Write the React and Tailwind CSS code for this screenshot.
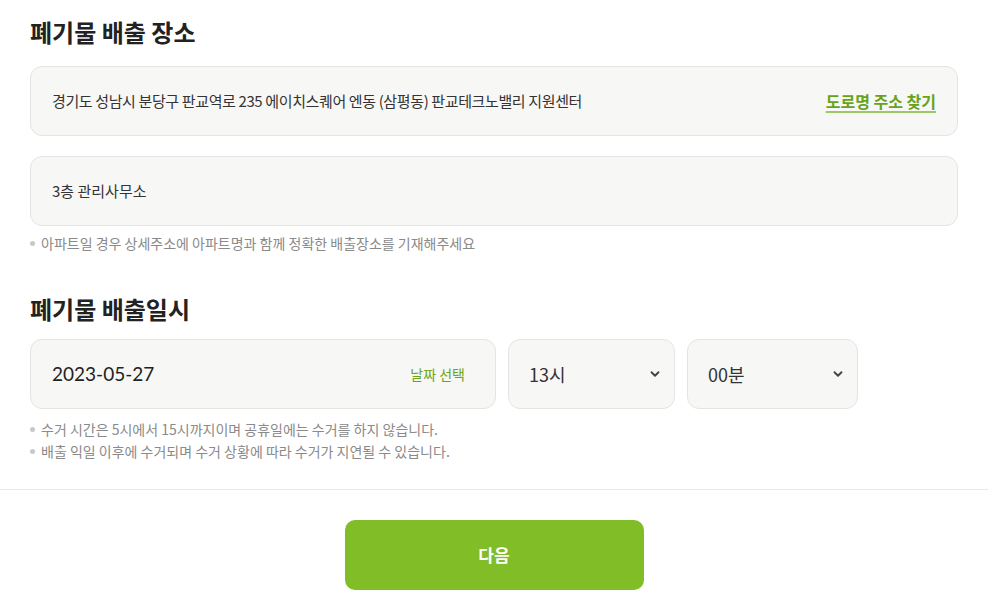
import { ChevronDown } from "lucide-react";

const font = { fontFamily: '"Noto Sans CJK KR", "Noto Sans", sans-serif' };

const Field = ({ children, className = "" }) => (
  <div
    className={`flex items-center h-[70px] px-[21px] bg-[#f7f7f5] border border-[#e4e4e2] rounded-[12px] ${className}`}
  >
    {children}
  </div>
);

const Note = ({ children }) => (
  <li className="flex items-center gap-[6px] text-[14px] leading-[22px] text-[#8a8a8a]">
    <span className="w-[5px] h-[5px] rounded-full bg-[#c8c8c8]" />
    {children}
  </li>
);

const SelectBox = ({ value, className }) => (
  <div
    className={`flex items-center justify-between h-[70px] pl-[20px] pr-[12px] bg-[#f7f7f5] border border-[#e4e4e2] rounded-[12px] ${className}`}
  >
    <span className="text-[18px] text-[#333]">{value}</span>
    <ChevronDown size={14} strokeWidth={3.2} className="text-[#444]" />
  </div>
);

export default function App() {
  return (
    <div className="w-[998px] h-[613px] bg-white overflow-hidden" style={font}>
      <div className="w-[988px]">
        <div className="px-[30px] pt-[17px]">
          <h2 className="text-[24px] font-bold text-[#222] leading-[30px]">
            폐기물 배출 장소
          </h2>
          <Field className="mt-[19px] w-[928px] justify-between">
            <span className="text-[15px] text-[#333] tracking-tight">
              경기도 성남시 분당구 판교역로 235 에이치스퀘어 엔동 (삼평동) 판교테크노밸리 지원센터
            </span>
            <button className="text-[16px] font-semibold text-[#67a21b] underline underline-offset-[3px] decoration-[#9cc86a] decoration-2">
              도로명 주소 찾기
            </button>
          </Field>
          <Field className="mt-[20px] w-[928px]">
            <span className="text-[15px] text-[#333]">3층 관리사무소</span>
          </Field>
          <ul className="mt-[6px]">
            <Note>아파트일 경우 상세주소에 아파트명과 함께 정확한 배출장소를 기재해주세요</Note>
          </ul>

          <h2 className="mt-[40px] text-[24px] font-bold text-[#222] leading-[30px]">
            폐기물 배출일시
          </h2>
          <div className="mt-[15px] flex gap-[12px]">
            <Field className="w-[466px] justify-between pr-[30px]">
              <span className="text-[19px] text-[#222]" style={{ fontFamily: "Lato, sans-serif" }}>
                2023-05-27
              </span>
              <span className="text-[14px] text-[#6aa51c]">날짜 선택</span>
            </Field>
            <SelectBox value="13시" className="w-[167px]" />
            <SelectBox value="00분" className="w-[171px]" />
          </div>
          <ul className="mt-[9px]">
            <Note>수거 시간은 5시에서 15시까지이며 공휴일에는 수거를 하지 않습니다.</Note>
            <Note>배출 익일 이후에 수거되며 수거 상황에 따라 수거가 지연될 수 있습니다.</Note>
          </ul>
        </div>
        <div className="mt-[27px] border-t border-[#e8e8e8] flex justify-center pt-[30px]">
          <button className="w-[299px] h-[70px] rounded-[10px] bg-[#80bd27] text-white text-[17px] font-bold">
            다음
          </button>
        </div>
      </div>
    </div>
  );
}
